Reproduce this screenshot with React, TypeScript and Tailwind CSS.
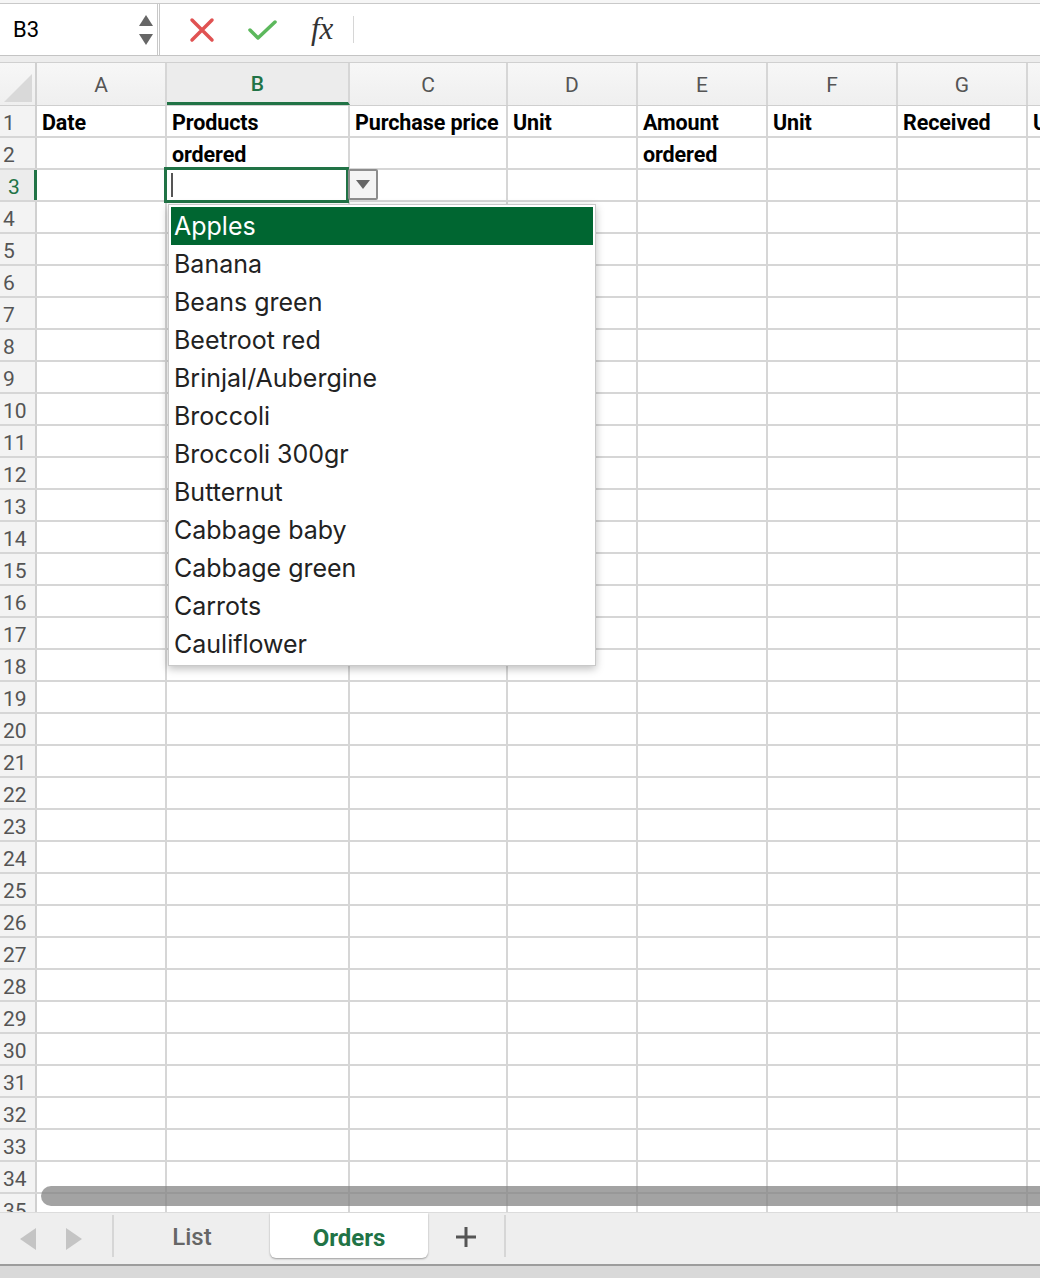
import React from 'react';

const COLS = [
  { key: 'A', w: 'w-[130px]' },
  { key: 'B', w: 'w-[183px]' },
  { key: 'C', w: 'w-[158px]' },
  { key: 'D', w: 'w-[130px]' },
  { key: 'E', w: 'w-[130px]' },
  { key: 'F', w: 'w-[130px]' },
  { key: 'G', w: 'w-[130px]' },
  { key: 'H', w: 'w-[130px]' },
];

// Cell text for the first two rows, keyed by column letter.
const HEADER_TEXT: Record<number, Record<string, string>> = {
  1: { A: 'Date', B: 'Products', C: 'Purchase price', D: 'Unit', E: 'Amount', F: 'Unit', G: 'Received', H: 'Unit' },
  2: { B: 'ordered', E: 'ordered' },
};

const PRODUCTS = [
  'Apples',
  'Banana',
  'Beans green',
  'Beetroot red',
  'Brinjal/Aubergine',
  'Broccoli',
  'Broccoli 300gr',
  'Butternut',
  'Cabbage baby',
  'Cabbage green',
  'Carrots',
  'Cauliflower',
];

const ROWS = Array.from({ length: 35 }, (_, i) => i + 1);

function FormulaBar() {
  return (
    <div className="h-[63px] bg-[#ececec] flex flex-col">
      <div className="h-[4px] bg-[#f6f6f6] border-b border-[#c9c9c9]" />
      <div className="h-[52px] flex bg-white border-b border-[#c4c4c4]">
        {/* name box */}
        <div className="w-[160px] flex items-center justify-between pl-[13px] pr-[4px] border-r-[3px] border-double border-[#c8c8c8]">
          <span className="text-[22px] text-black leading-none">B3</span>
          <div className="flex flex-col gap-[8px] items-center">
            <svg width="14" height="11" viewBox="0 0 14 11">
              <path d="M7 0 L14 11 L0 11 Z" fill="#666" />
            </svg>
            <svg width="14" height="11" viewBox="0 0 14 11">
              <path d="M0 0 L14 0 L7 11 Z" fill="#666" />
            </svg>
          </div>
        </div>
        {/* cancel / enter / fx */}
        <div className="w-[193px] flex items-center pl-[29px] gap-[32px]">
          <svg width="26" height="26" viewBox="0 0 26 26">
            <path d="M3 3 L23 23 M23 3 L3 23" stroke="#e05252" strokeWidth="3.5" strokeLinecap="round" />
          </svg>
          <svg width="32" height="24" viewBox="0 0 32 24">
            <path d="M3 12 L11 20 L28 4" stroke="#5cb85c" strokeWidth="3.5" fill="none" strokeLinecap="round" strokeLinejoin="round" />
          </svg>
          <span
            className="text-[31px] italic text-[#333] leading-none pb-[2px]"
            style={{ fontFamily: '"Liberation Serif", serif' }}
          >
            fx
          </span>
        </div>
        <div className="w-px my-[12px] bg-[#d6d6d6]" />
        <div className="flex-1 bg-white" />
      </div>
      <div className="flex-1 bg-[#ededed] border-b border-[#d0d0d0]" />
    </div>
  );
}

function ColumnHeaders() {
  return (
    <div className="flex h-[43px] bg-gradient-to-b from-[#f7f7f7] to-[#efefef] border-b border-[#cfcfcf]">
      <div className="w-[37px] shrink-0 border-r-2 border-[#d0d0d0] flex items-end justify-end p-[3px]">
        <svg width="28" height="28" viewBox="0 0 28 28">
          <path d="M28 0 L28 28 L0 28 Z" fill="#d9d9d9" />
        </svg>
      </div>
      {COLS.map((c) =>
        c.key === 'B' ? (
          <div
            key={c.key}
            className={`${c.w} shrink-0 flex items-center justify-center border-r-2 border-[#d6d6d6] border-b-[3px] border-b-[#217346] bg-[#ececec] text-[21px] font-medium text-[#217346] pt-[4px]`}
          >
            {c.key}
          </div>
        ) : (
          <div
            key={c.key}
            className={`${c.w} shrink-0 flex items-center justify-center border-r-2 border-[#d6d6d6] text-[21px] text-[#555] pt-[3px]`}
          >
            {c.key}
          </div>
        ),
      )}
    </div>
  );
}

function Row({ n }: { n: number }) {
  const active = n === 3;
  return (
    <div className="flex h-[32px] shrink-0 border-b-2 border-[#d6d6d6]">
      <div
        className={
          active
            ? 'w-[37px] shrink-0 bg-[#ececec] border-r-[3px] border-[#217346] text-[#217346] text-[21px] pl-[8px] pt-[5px] flex items-center'
            : 'w-[37px] shrink-0 bg-[#f3f3f3] border-r-2 border-[#d0d0d0] text-[#555] text-[21px] pl-[3px] pt-[5px] flex items-center'
        }
      >
        {n}
      </div>
      {COLS.map((c) => {
        const text = HEADER_TEXT[n]?.[c.key];
        return (
          <div
            key={c.key}
            className={`${c.w} shrink-0 border-r-2 border-[#d6d6d6] relative flex items-center pl-[5px] pt-[5px] text-[21.5px] font-bold text-black whitespace-nowrap overflow-visible tracking-[-0.1px]`}
            style={{ fontFamily: 'Roboto, "Liberation Sans", sans-serif' }}
          >
            {text}
            {active && c.key === 'B' && (
              <>
                <div className="absolute left-[-3px] top-[-3px] w-[185px] h-[36px] border-[3px] border-[#217346] z-10">
                  <div className="absolute left-[4px] top-[3px] w-[2px] h-[24px] bg-[#555]" />
                </div>
                <div className="absolute left-[181px] top-[-1px] w-[30px] h-[31px] bg-[#f4f4f4] border-2 border-[#8d8d8d] rounded-[2px] z-20 flex items-center justify-center">
                  <svg width="14" height="9" viewBox="0 0 14 9">
                    <path d="M0 0 L14 0 L7 9 Z" fill="#666" />
                  </svg>
                </div>
              </>
            )}
          </div>
        );
      })}
    </div>
  );
}

function Dropdown() {
  return (
    <div
      className="absolute left-[168px] top-[204px] w-[428px] bg-white border border-[#c9c9c9] shadow-[0_3px_8px_rgba(0,0,0,0.25)] p-[2px] z-30"
      style={{ fontFamily: 'Inter, "Noto Sans", sans-serif' }}
    >
      {PRODUCTS.map((p, i) => (
        <div
          key={p}
          className={
            i === 0
              ? 'h-[38px] bg-[#006631] text-white text-[25px] pl-[3px] flex items-center leading-none'
              : 'h-[38px] text-[#222] text-[25px] pl-[3px] flex items-center leading-none'
          }
        >
          {p}
        </div>
      ))}
    </div>
  );
}

function SheetTabs() {
  return (
    <div className="h-[66px] flex flex-col">
      <div className="h-[52px] bg-[#eeeeee] flex items-start border-t border-[#dcdcdc]">
        <div className="w-[112px] h-[40px] flex items-center pl-[20px] gap-[30px] mt-[6px]">
          <svg width="16" height="22" viewBox="0 0 16 22">
            <path d="M16 0 L16 22 L0 11 Z" fill="#c4c4c4" />
          </svg>
          <svg width="16" height="22" viewBox="0 0 16 22">
            <path d="M0 0 L0 22 L16 11 Z" fill="#c4c4c4" />
          </svg>
        </div>
        <div className="w-[2px] h-[42px] bg-[#d6d6d6] mt-[2px]" />
        <div className="w-[156px] h-[48px] flex items-center justify-center text-[24px] font-medium text-[#666]">
          List
        </div>
        <div className="w-[158px] h-[45px] bg-white rounded-b-[6px] shadow-[0_1px_2px_rgba(0,0,0,0.35)] flex items-center justify-center text-[24px] font-bold text-[#217346] pt-[4px]">
          Orders
        </div>
        <div className="w-[76px] h-[48px] flex items-center justify-center">
          <svg width="22" height="22" viewBox="0 0 22 22">
            <path d="M11 1 V21 M1 11 H21" stroke="#555" strokeWidth="3" />
          </svg>
        </div>
        <div className="w-[2px] h-[42px] bg-[#d6d6d6] mt-[2px]" />
      </div>
      <div className="h-[2px] bg-[#9c9c9c]" />
      <div className="flex-1 bg-[#d9d9d9]" />
    </div>
  );
}

export default function App() {
  return (
    <div
      className="w-[1040px] h-[1278px] bg-white overflow-hidden relative flex flex-col"
      style={{ fontFamily: 'Roboto, "Liberation Sans", sans-serif' }}
    >
      <FormulaBar />
      <ColumnHeaders />
      <div className="h-[1106px] overflow-hidden flex flex-col relative">
        {ROWS.map((n) => (
          <Row key={n} n={n} />
        ))}
        {/* horizontal scroll thumb */}
        <div className="absolute left-[41px] top-[1080px] right-[-10px] h-[20px] rounded-full bg-[rgba(128,128,128,0.72)] z-10" />
      </div>
      <SheetTabs />
      <Dropdown />
    </div>
  );
}
